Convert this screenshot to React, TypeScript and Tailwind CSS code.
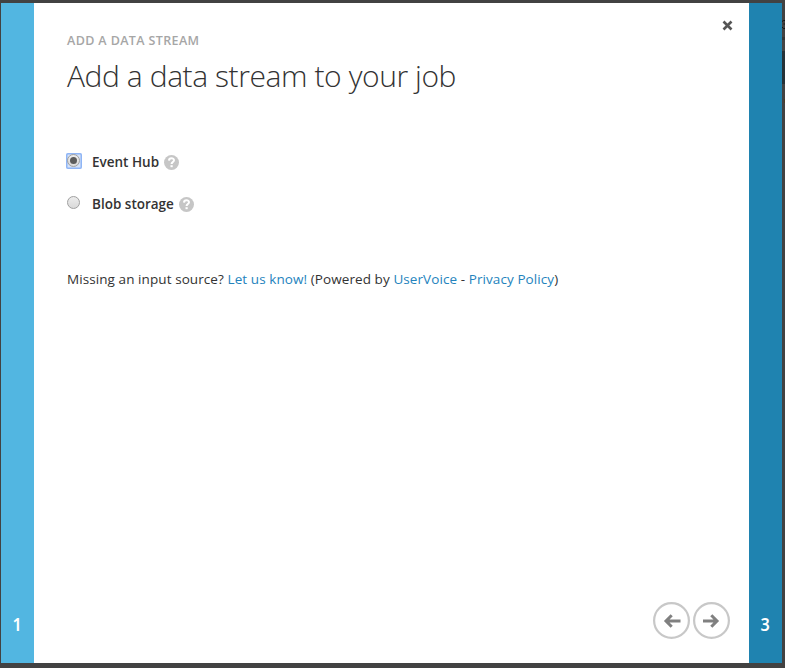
import type { ReactNode } from "react";

function Help() {
  return (
    <svg className="block h-[15px] w-[15px]" viewBox="0 0 15 15" fill="none">
      <circle cx="7.5" cy="7.5" r="7.5" fill="#c6c6c6" />
      <path d="M5 5.6C5.1 2.6 10 2.6 10 5.3C10 7.1 7.6 7.1 7.6 9.1" stroke="#fff" strokeWidth="2" />
      <path d="M6.5 10.2h2.2v2h-2.2z" fill="#fff" />
    </svg>
  );
}

function Radio({ checked }: { checked?: boolean }) {
  return (
    <span className={`flex h-[16px] w-[16px] items-start justify-start rounded-[2px] pt-px pl-px ${checked ? "bg-[#d5e3fa] ring-[1.5px] ring-inset ring-[#8fb5f5]" : ""}`}>
      <span className="flex h-[13px] w-[13px] items-center justify-center rounded-full border border-[#a0a0a0] bg-linear-to-b from-[#ececec] to-[#dadada]">
        {checked && <span className="h-[7px] w-[7px] rounded-full bg-[#5c5c5c]" />}
      </span>
    </span>
  );
}

function Option({ label, checked }: { label: string; checked?: boolean }) {
  return (
    <div className="flex h-[42px] items-start">
      <div className="-ml-px pt-px"><Radio checked={checked} /></div>
      <span className="ml-[10px] text-[13.5px] leading-[20px] font-semibold whitespace-nowrap text-[#333]">{label}</span>
      <span className="ml-[5px] pt-[3px]"><Help /></span>
    </div>
  );
}

function Link({ children }: { children: ReactNode }) {
  return <a className="text-[#2483bd]">{children}</a>;
}

function Arrow({ flip }: { flip?: boolean }) {
  return (
    <svg className={`block h-[38px] w-[38px] ${flip ? "-scale-x-100" : ""}`} viewBox="0 0 38 38" fill="none">
      <circle cx={flip ? 19.5 : 18.5} cy="18.5" r="17.4" stroke="#c8c8c8" strokeWidth="2.2" />
      <path d={flip ? "M13.5 19H28M19.7 13.3L14 19L19.7 24.7" : "M13 19h14.5M18.7 13.3L13 19L18.7 24.7"} stroke="#808080" strokeWidth="3" />
    </svg>
  );
}

export default function App() {
  return (
    <div className="flex h-[668px] w-[785px] overflow-hidden bg-[#424242] pt-[3px] pb-[5px] pl-px font-['Open_Sans',sans-serif]">
      <aside className="flex w-[33px] shrink-0 items-end justify-center bg-[#52b6e1] pr-px pb-[27px] font-['Noto_Sans',sans-serif] text-[18px] leading-[24px] font-semibold text-white">
        <span className="scale-x-90">1</span>
      </aside>
      <main className="flex w-[715px] shrink-0 flex-col bg-white pl-[33px]">
        <div className="flex h-[51px] justify-between pt-[16px] pr-[16px]">
          <div className="pt-[13px] text-[12.5px] leading-[18px] font-semibold tracking-[0.38px] whitespace-nowrap text-[#a6a6a6]">ADD A DATA STREAM</div>
          <svg className="h-[12px] w-[11px]" viewBox="0 0 11 12"><path d="M1.5 2.5L9.5 10.5M9.5 2.5L1.5 10.5" stroke="#555" strokeWidth="2.6" /></svg>
        </div>
        <h1 className="h-[98px] text-[30px] leading-[44px] font-light tracking-[-0.42px] whitespace-nowrap text-[#333]">Add a data stream to your job</h1>
        <Option label="Event Hub" checked />
        <Option label="Blob storage" />
        <p className="mt-[33px] text-[13.5px] leading-[20px] tracking-[0.08px] whitespace-nowrap text-[#333]">
          Missing an input source? <Link>Let us know!</Link> (Powered by <Link>UserVoice</Link> - <Link>Privacy Policy</Link>)
        </p>
        <div className="mt-auto mr-[18px] mb-[23px] flex justify-end gap-[2px]"><Arrow /><Arrow flip /></div>
      </main>
      <aside className="flex w-[33px] shrink-0 items-end justify-center bg-[#1f83b0] pr-px pb-[27px] font-['Noto_Sans',sans-serif] text-[18px] leading-[24px] font-semibold text-white">
        <span className="scale-x-90">3</span>
      </aside>
      <div className="w-[3px] shrink-0">
        <svg className="mt-[17px] block h-[9px] w-[3px]" viewBox="0 0 3 9" fill="none">
          <path d="M0 1.5L1.5 .5H3M3 4H1.5M0 7L1.5 8.5H3" stroke="#151515" />
        </svg>
        <div className="mt-[8px] h-[3px] bg-[#363636]" />
        <div className="h-[11px] bg-[#454545]" />
        <div className="h-[33px] bg-[#263238]" />
        <div className="mt-[15px] ml-[2px] h-[4px] w-px bg-[#4a3c28]" />
      </div>
    </div>
  );
}
